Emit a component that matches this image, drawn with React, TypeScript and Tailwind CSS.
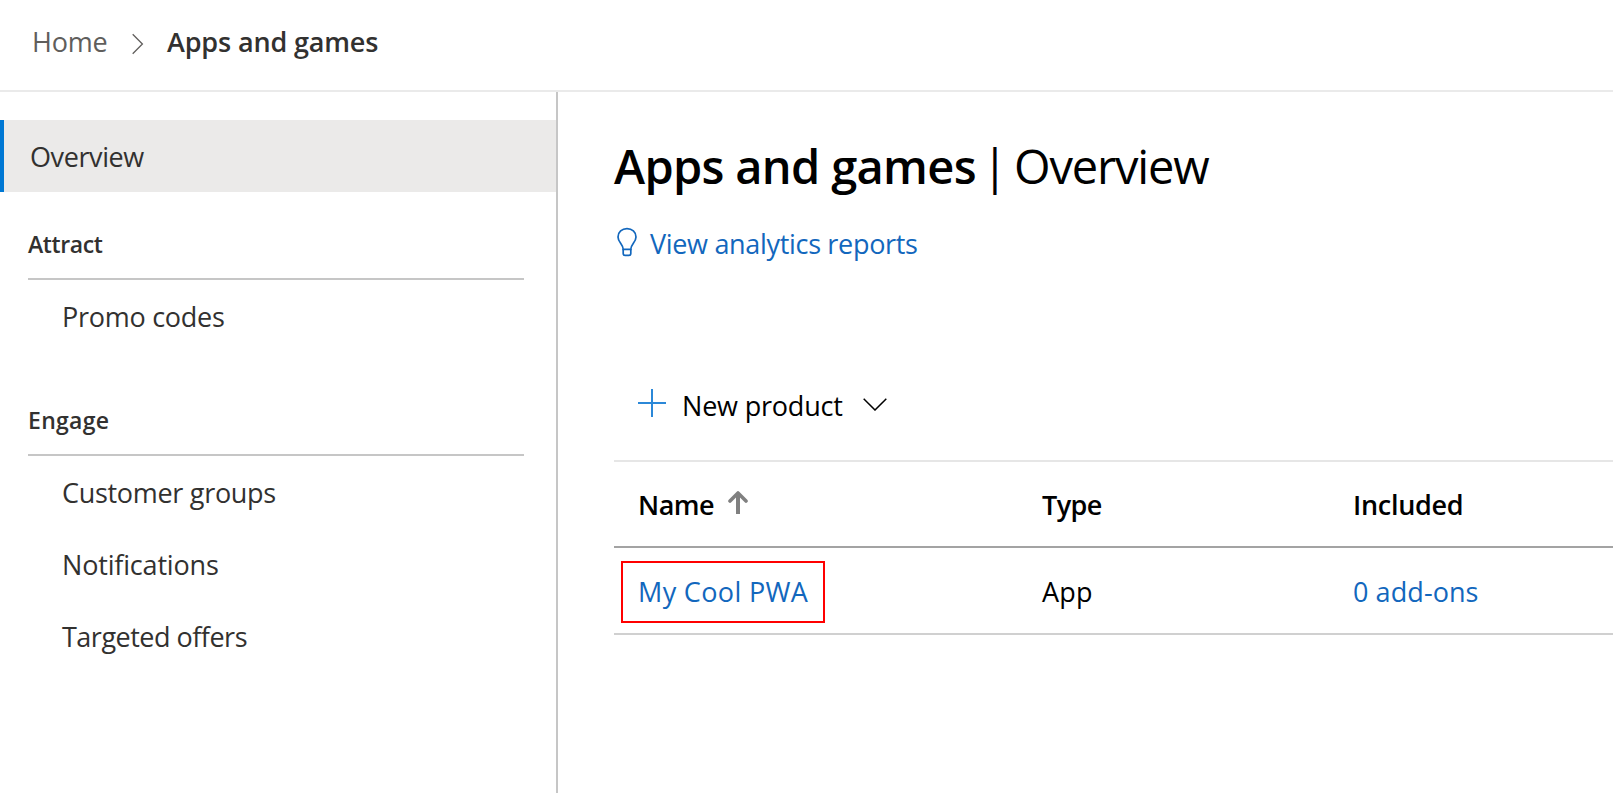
function NavItem({ label, tracking }: { label: string; tracking: string }) {
  return (
    <a className={`flex h-[72px] items-center pl-[62px] pt-[2px] text-[27px] text-[#323130] ${tracking}`}>{label}</a>
  );
}

function NavHeading({ label, tracking }: { label: string; tracking: string }) {
  return (
    <h2
      className={`ml-7 mr-8 flex h-[72px] items-center border-b-2 border-[#c6c6c6] pt-[3px] text-[23px] font-semibold text-[#323130] ${tracking}`}
    >
      {label}
    </h2>
  );
}

function Bulb() {
  return (
    <svg width="20" height="30" viewBox="0 0 20 30" fill="none" stroke="currentColor" strokeWidth="1.7">
      <path d="M6.2 22.3C6.2 17.2 1 15.2 1 9.9C1 5 5 1.6 10 1.6C15 1.6 19 5 19 9.9C19 15.2 13.8 17.2 13.8 22.3Z" />
      <path d="M6.2 22V26.6Q6.2 28.4 8 28.4H12Q13.8 28.4 13.8 26.6V22" />
    </svg>
  );
}

export default function App() {
  return (
    <div className="flex h-[793px] w-full flex-col overflow-hidden bg-white font-['Open_Sans','Noto_Sans',sans-serif]">
      <header className="flex h-[92px] shrink-0 items-center border-b-2 border-[#eaeaea] pb-[5px] pl-8 text-[27px]">
        <a className="w-[100px] tracking-[-0.2px] text-[#605e5c]">Home</a>
        <svg className="mt-0.5" width="12" height="22" viewBox="0 0 12 22" fill="none" stroke="#605e5c" strokeWidth="1.3">
          <path d="M0.7 1.3L10.4 11L0.7 20.7" />
        </svg>
        <span className="ml-[23px] font-semibold tracking-[-0.15px] text-[#323130]">Apps and games</span>
      </header>

      <div className="flex min-h-0 flex-1">
        <nav className="w-[558px] shrink-0 border-r-2 border-[#c6c6c6] pt-7">
          <a className="flex h-[72px] items-center border-l-4 border-[#0078d4] bg-[#ebeae9] pl-[26px] pt-[2px] text-[27px] tracking-[-0.4px] text-[#323130]">
            Overview
          </a>
          <div className="mt-4">
            <NavHeading label="Attract" tracking="tracking-[-0.4px]" />
            <NavItem label="Promo codes" tracking="tracking-[-0.27px]" />
          </div>
          <div className="mt-8">
            <NavHeading label="Engage" tracking="tracking-[0.3px]" />
            <NavItem label="Customer groups" tracking="tracking-[-0.3px]" />
            <NavItem label="Notifications" tracking="tracking-[-0.18px]" />
            <NavItem label="Targeted offers" tracking="tracking-[-0.5px]" />
          </div>
        </nav>

        <main className="min-w-0 flex-1 pl-14 pt-[42px] text-[27px] text-black">
          <h1 className="flex h-16 items-center whitespace-nowrap pt-px text-[47px]">
            <span className="w-[371px] font-semibold tracking-[-0.68px]">Apps and games</span>
            <span className="-ml-[3px] w-[26px]">|</span>
            <span className="ml-[6px] tracking-[-1.15px]">Overview</span>
          </h1>
          <a className="mt-[26px] flex h-10 items-center pl-[3px] text-[#1267bd]">
            <span className="mb-1">
              <Bulb />
            </span>
            <span className="ml-[13px] tracking-[-0.32px]">View analytics reports</span>
          </a>

          <div className="mb-[26px] mt-[113px] flex h-[57px] items-center pl-6 pt-[2px]">
            <svg className="mb-[7px]" width="28" height="28" viewBox="0 0 28 28" stroke="#2b88d8" strokeWidth="2">
              <path d="M0 14H28M14 0V28" />
            </svg>
            <span className="ml-4 w-[181px] tracking-[-0.2px]">New product</span>
            <svg className="mb-1" width="24" height="13" viewBox="0 0 24 13" fill="none" stroke="#000" strokeWidth="1.5">
              <path d="M0.7 0.7L12 12L23.3 0.7" />
            </svg>
          </div>

          <div className="grid h-[88px] grid-cols-[404px_311px_1fr] items-center border-b-2 border-t-2 border-b-[#a3a3a3] border-t-[#e6e6e6] pl-6 pt-[2px] font-semibold">
            <span className="flex items-center tracking-[-0.5px]">
              Name
              <svg className="mb-[6px] ml-[14px]" width="20" height="24" viewBox="0 0 20 24" fill="none" stroke="#808080">
                <path d="M10 3V24" strokeWidth="4" />
                <path d="M2 11L10 3L18 11" strokeWidth="3.6" strokeLinecap="round" strokeLinejoin="round" />
              </svg>
            </span>
            <span className="tracking-[-0.6px]">Type</span>
            <span className="tracking-[-0.3px]">Included</span>
          </div>
          <div className="grid h-[87px] grid-cols-[404px_311px_1fr] items-center border-b-2 border-[#d0d0d0] pl-6 pt-[2px]">
            <a className="-ml-[17px] flex h-[62px] w-[204px] items-center border-2 border-[#ff0000] pl-[15px] pt-px tracking-[0.35px] text-[#1267bd]">
              My Cool PWA
            </a>
            <span className="pt-px tracking-[0.2px]">App</span>
            <a className="pt-px tracking-[0.08px] text-[#1267bd]">0 add-ons</a>
          </div>
        </main>
      </div>
    </div>
  );
}
